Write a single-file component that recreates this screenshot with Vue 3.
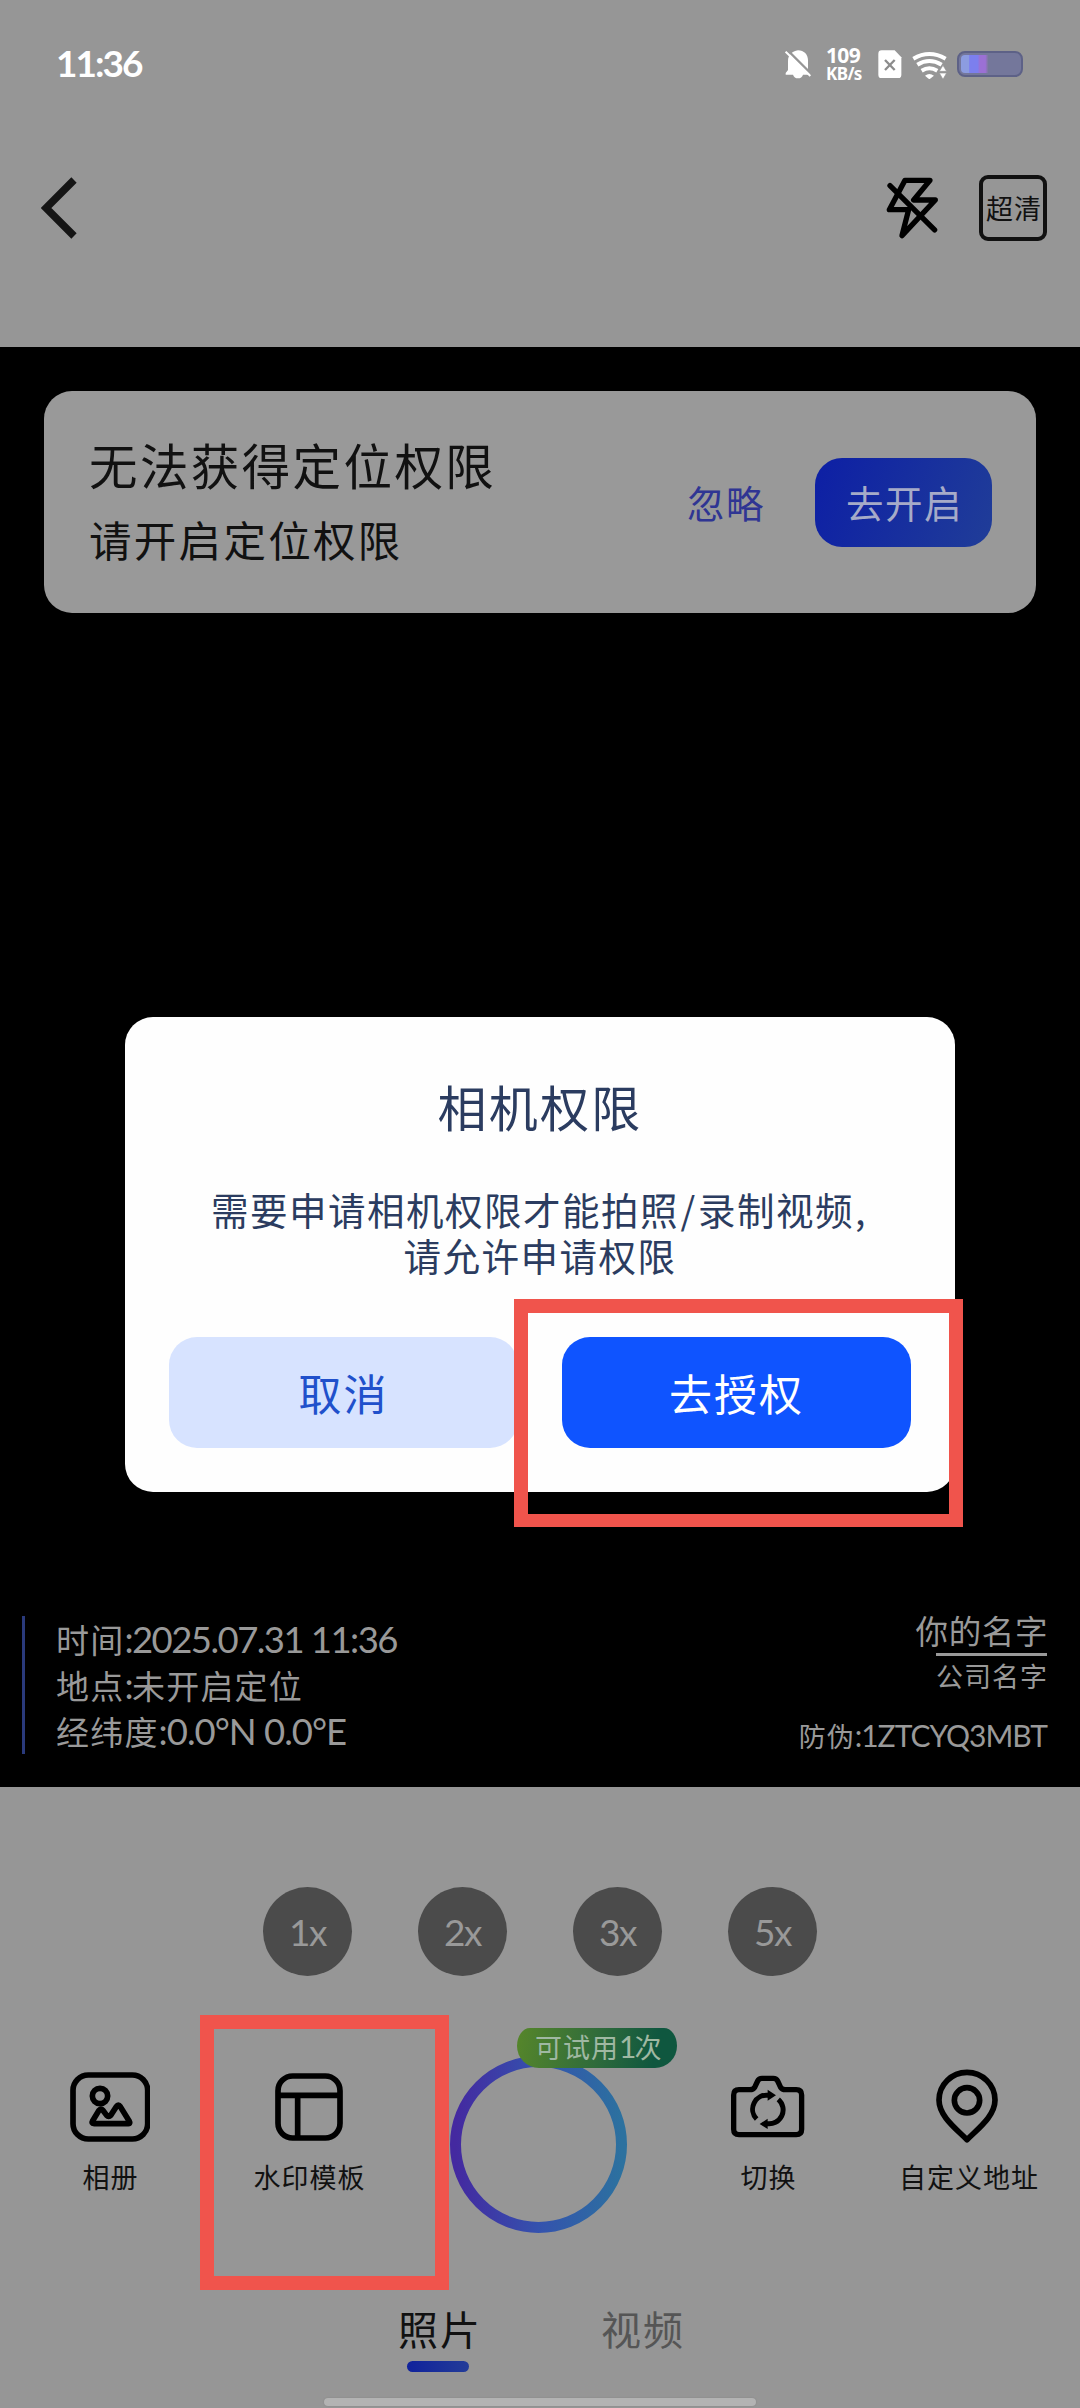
<script setup>
const zooms = ['1x', '2x', '3x', '5x']
</script>

<template>
  <div class="screen">
    <header class="head">
      <div class="status">
        <span class="clock">11:36</span>
        <div class="status-icons">
          <svg class="bell" viewBox="136 86 80 90">
            <path d="M175 90C157 92 145 105 145 122V149L138 158V163H160C162 170 168 174 175 174S188 170 190 163H212V158L205 149V120C205 103 193 90 175 90Z" fill="#fff" />
            <path d="M142 88L216 162" stroke="#969696" stroke-width="7" />
            <path d="M138 94L212 167" stroke="#fff" stroke-width="6" />
          </svg>
          <div class="speed"><span class="rate">109</span><span class="unit">KB/s</span></div>
          <svg class="sim" viewBox="413 89 71 86">
            <path d="M424 90H463L483 111V164Q483 174 473 174H424Q414 174 414 164V100Q414 90 424 90Z" fill="#fff" />
            <path d="M434 119L463 149M463 119L434 149" stroke="#8c8c8c" stroke-width="7" />
          </svg>
          <svg class="wifi" viewBox="514 90 106 86">
            <g fill="none" stroke="#fff" stroke-width="12">
              <path d="M518 113Q566 85 615 113" />
              <path d="M530 131Q566 109 603 131" />
              <path d="M543 149Q566 135 590 149" />
            </g>
            <path d="M553 164Q566 154 580 164L566 175Z" fill="#fff" />
            <path d="M607 133L618 151H596ZM607 175L596 156H618Z" fill="#fff" stroke="#969696" stroke-width="2" />
          </svg>
          <div class="battery"><i class="charge"></i></div>
        </div>
      </div>
      <nav class="toolbar">
        <svg class="back" viewBox="0 0 36 62"><path d="M33 3L5 31L33 59" fill="none" stroke="#151515" stroke-width="7.5" /></svg>
        <div class="tools">
          <svg class="flash" viewBox="440 468 160 190" fill="none" stroke="#000" stroke-width="16" stroke-linejoin="round" stroke-linecap="round">
            <path d="M497 481H572L523 540H588L488 647L508 569H450Z" />
            <path d="M452 497L586 630" />
          </svg>
          <div class="hd">超清</div>
        </div>
      </nav>
    </header>

    <main class="preview">
      <section class="notice">
        <div class="notice-text">
          <div class="notice-title">无法获得定位权限</div>
          <div class="notice-sub">请开启定位权限</div>
        </div>
        <div class="ignore">忽略</div>
        <div class="enable">去开启</div>
      </section>
      <section class="watermark">
        <div class="info">
          <div>时间<span class="lat">:2025.07.31 11:36</span></div>
          <div>地点<span class="lat">:</span>未开启定位</div>
          <div>经纬度<span class="lat geo">:0.0°N 0.0°E</span></div>
        </div>
        <div class="owner">
          <div class="name">你的名字</div>
          <div class="company">公司名字</div>
          <div class="code">防伪<span class="lat">:1ZTCYQ3MBT</span></div>
        </div>
      </section>
    </main>

    <footer class="foot">
      <div class="zooms"><span v-for="z in zooms" :key="z" class="zoom">{{ z }}</span></div>
      <div class="actions">
        <div class="action side">
          <svg class="ic-album" viewBox="209 636 242 210" fill="none" stroke="#000" stroke-width="17" stroke-linejoin="round">
            <rect x="218" y="645" width="224" height="192" rx="46" />
            <circle cx="299" cy="708" r="23" />
            <path d="M281 791H384Q391 791 386 782L360 740Q354 731 348 740L331 766Q325 773 319 766L307 750Q302 744 296 751L277 782Q272 791 281 791Z" />
          </svg>
          <span class="label">相册</span>
        </div>
        <div class="action">
          <svg class="ic-layout" viewBox="825 639 204 204" fill="none" stroke="#000" stroke-width="17">
            <rect x="834" y="648" width="186" height="186" rx="44" />
            <path d="M834 706H1020M893 706V834" />
          </svg>
          <span class="label">水印模板</span>
        </div>
        <div class="shutter">
          <svg class="ring" viewBox="0 0 177 177">
            <defs><linearGradient id="ringFill" x1="0" y1="0" x2="1" y2="0"><stop offset="0" stop-color="#4429a0" /><stop offset=".5" stop-color="#3452ae" /><stop offset="1" stop-color="#2c719f" /></linearGradient></defs>
            <circle cx="88.5" cy="88.5" r="83" fill="none" stroke="url(#ringFill)" stroke-width="11" />
          </svg>
          <div class="trial"><span>可试用<b>1</b>次</span></div>
        </div>
        <div class="action">
          <svg class="ic-camera" viewBox="94 166 220 190" fill="none" stroke="#000" stroke-width="16" stroke-linejoin="round">
            <path d="M118 210H150Q161 210 165 203L174 184Q178 176 187 176H221Q230 176 234 184L243 203Q247 210 258 210H290Q306 210 306 226V329Q306 345 290 345H118Q102 345 102 329V226Q102 210 118 210Z" />
            <path d="M171 298A42 42 0 0 1 207 227M236 239A42 42 0 0 1 201 312" stroke-width="15" />
            <path d="M204 210L229 227L204 243ZM204 297L180 313L204 328Z" fill="#000" stroke="none" />
          </svg>
          <span class="label">切换</span>
        </div>
        <div class="action last">
          <svg class="ic-pin" viewBox="711 149 186 224" fill="none" stroke="#000" stroke-width="17" stroke-linejoin="round">
            <path d="M804 361C770 327 720 290 720 242A84 83 0 0 1 888 242C888 290 838 327 804 361Z" />
            <circle cx="804" cy="243" r="38" />
          </svg>
          <span class="label">自定义地址</span>
        </div>
      </div>
      <div class="tabs">
        <div class="tab active">照片</div>
        <div class="tab">视频</div>
      </div>
      <div class="home"></div>
    </footer>

    <div class="overlay">
      <div class="dialog">
        <h1>相机权限</h1>
        <p>需要申请相机权限才能拍照<span class="slash">/</span>录制视频<span class="comma">,</span><br />请允许申请权限</p>
        <div class="buttons">
          <div class="btn cancel">取消</div>
          <div class="btn grant">去授权</div>
        </div>
      </div>
    </div>
    <div class="mark mark-grant"></div>
    <div class="mark mark-template"></div>
  </div>
</template>

<style>
body { margin: 0; }
</style>

<style scoped>
.screen { position: relative; width: 1080px; height: 2408px; overflow: hidden; background: #969696; color: #111; font-family: "Noto Sans CJK SC", sans-serif; display: flex; flex-direction: column; white-space: nowrap; }
.screen * { box-sizing: border-box; }
svg { display: block; flex: none; }
.lat { font-family: Lato, sans-serif; }

.head { height: 347px; flex: none; }
.status { height: 128px; padding: 0 57px 0 56px; display: flex; justify-content: space-between; align-items: center; color: #fff; }
.clock { font: 700 37px/44px Lato, sans-serif; letter-spacing: -2px; margin-top: -2px; }
.status-icons { display: flex; align-items: center; }
.bell { width: 26.7px; height: 30px; }
.speed { display: flex; flex-direction: column; width: 38px; margin: 0 14px 0 14px; font-family: "Noto Sans", sans-serif; font-weight: 700; }
.rate { font-size: 21px; line-height: 20px; letter-spacing: -.7px; }
.unit { font-size: 17px; line-height: 18px; letter-spacing: -.6px; }
.sim { width: 23.7px; height: 28.7px; }
.wifi { width: 35.3px; height: 28.7px; margin: 2px 10px 0; }
.battery { width: 66px; height: 26px; border: 2px solid #5d6187; border-radius: 8px; background: #74779b; padding: 2px; display: flex; }
.charge { width: 27px; border-radius: 4px 0 0 4px; background: linear-gradient(90deg, #8c9ce0 0 28%, #7c7fee 32% 62%, #9b70d5 70% 90%, #7d779f); }
.toolbar { height: 160px; padding: 0 33px 0 41px; display: flex; justify-content: space-between; align-items: center; }
.back { width: 36px; height: 62px; }
.tools { display: flex; align-items: center; gap: 40px; }
.flash { width: 53.3px; height: 63.3px; }
.hd { width: 68px; height: 66px; border: 4px solid #111; border-radius: 9px; font-size: 27px; letter-spacing: 1px; line-height: 57px; padding-left: 3px; }

.preview { height: 1440px; flex: none; background: #000; padding-top: 44px; display: flex; flex-direction: column; justify-content: space-between; }
.notice { margin: 0 44px; height: 222px; border-radius: 28px; background: #999; display: flex; align-items: center; padding: 0 44px 0 45px; }
.notice-text { flex: 1; padding-bottom: 4px; }
.notice-title { font-size: 48.5px; letter-spacing: 2.4px; line-height: 78px; }
.notice-sub { font-size: 42.5px; letter-spacing: 2.3px; line-height: 72px; }
.ignore { font-size: 37.5px; letter-spacing: 1.5px; line-height: 80px; color: #2f3593; margin-right: 50px; }
.enable { width: 177px; height: 89px; border-radius: 27px; background: linear-gradient(110deg, #0d1fa5, #203d98); color: #a6abc8; font-size: 37.5px; letter-spacing: 1.5px; line-height: 87px; padding-left: 31px; }
.watermark { height: 171px; padding: 0 33px 0 22px; display: flex; justify-content: space-between; color: #999; }
.info { height: 138px; border-left: 3px solid #2a3a7c; padding-left: 31px; font-size: 33px; letter-spacing: 1.2px; }
.info > div { height: 46px; line-height: 46px; }
.info .lat { font-size: 36.5px; letter-spacing: -1.55px; }
.info .geo { letter-spacing: -1px; }
.owner { display: flex; flex-direction: column; align-items: flex-end; }
.name { font-size: 32.5px; letter-spacing: .6px; line-height: 27px; height: 37px; margin-right: -1px; }
.company { border-top: 3px solid #999; font-size: 27px; letter-spacing: 1px; line-height: 40px; height: 60px; width: 111px; }
.code { font-size: 27px; letter-spacing: 1px; line-height: 44px; }
.code .lat { font-size: 30px; letter-spacing: -1px; }

.foot { flex: 1; padding-top: 100px; display: flex; flex-direction: column; align-items: center; }
.zooms { display: flex; gap: 66px; height: 89px; }
.zoom { width: 89px; height: 89px; border-radius: 50%; background: #4b4b4b; color: #999; font: 400 37px/90px Lato, sans-serif; text-align: center; letter-spacing: -1.5px; }
.actions { display: flex; width: 1080px; height: 257px; margin-top: 39px; }
.action { width: 178px; padding-top: 54px; display: flex; flex-direction: column; align-items: center; justify-content: flex-start; }
.side { width: 220px; }
.last { width: 223px; }
.label { font-size: 27px; letter-spacing: 1px; line-height: 36px; height: 36px; margin-right: -1px; margin-top: auto; margin-bottom: 77px; }
.ic-album { width: 80.7px; height: 70px; margin-top: 3px; }
.ic-layout { width: 68px; height: 68px; margin-top: 4px; }
.ic-camera { width: 73.3px; height: 63.3px; margin-top: 6px; }
.ic-pin { width: 62px; height: 74.7px; margin-right: 3px; }
.shutter { position: relative; width: 281px; padding: 41px 0 0 52px; }
.ring { width: 177px; height: 177px; }
.trial { position: absolute; left: 119px; top: 13px; width: 160px; height: 40px; border-radius: 13px 13px 22px 22px / 18px 18px 22px 22px; background: linear-gradient(100deg, #56862a, #2f6b3b 50%, #0f573f 85%); color: #9fb8a2; font-size: 27px; letter-spacing: 1px; line-height: 37px; padding-left: 18px; }
.trial b { font-family: Lato, sans-serif; font-weight: 400; font-size: 30px; letter-spacing: -2px; }
.tabs { display: flex; gap: 120px; width: 284px; height: 74px; margin-top: 32px; }
.tab { width: 83px; font-size: 40px; letter-spacing: 2px; line-height: 48px; height: 74px; color: #555; }
.active { color: #111; display: flex; flex-direction: column; }
.active::after { content: ""; width: 62px; height: 11px; border-radius: 6px; margin: 9px 0 0 9px; background: linear-gradient(90deg, #10229c, #233c98); }
.home { width: 432px; height: 8px; border-radius: 4px; background: #b3b3b3; box-shadow: 0 0 2px #858585; margin-top: 20px; }

.overlay { position: absolute; inset: 0; padding: 1017px 125px 0; }
.dialog { height: 475px; border-radius: 28px; background: #fefefe; color: #2b3c60; padding: 59px 44px 0; text-align: center; }
.dialog h1 { margin: 0; font-size: 49px; font-weight: 400; letter-spacing: 2.2px; line-height: 60px; }
.dialog p { margin: 50px -20px 0; font-size: 37.5px; letter-spacing: 1.5px; line-height: 46px; height: 92px; }
.slash { display: inline-block; width: 19px; }
.comma { display: inline-block; width: 15px; text-align: left; text-indent: 1px; }
.buttons { display: flex; gap: 44px; margin-top: 59px; }
.btn { width: 349px; height: 111px; border-radius: 28px; font-size: 43px; letter-spacing: 2px; line-height: 110px; }
.cancel { background: #d7e3ff; color: #2050cb; }
.grant { background: #0f54ff; color: #fff; }
.mark { position: absolute; border: 14px solid #f0544c; }
.mark-grant { left: 514px; top: 1299px; width: 449px; height: 228px; border-bottom-width: 13px; }
.mark-template { left: 200px; top: 2015px; width: 249px; height: 275px; }
</style>
